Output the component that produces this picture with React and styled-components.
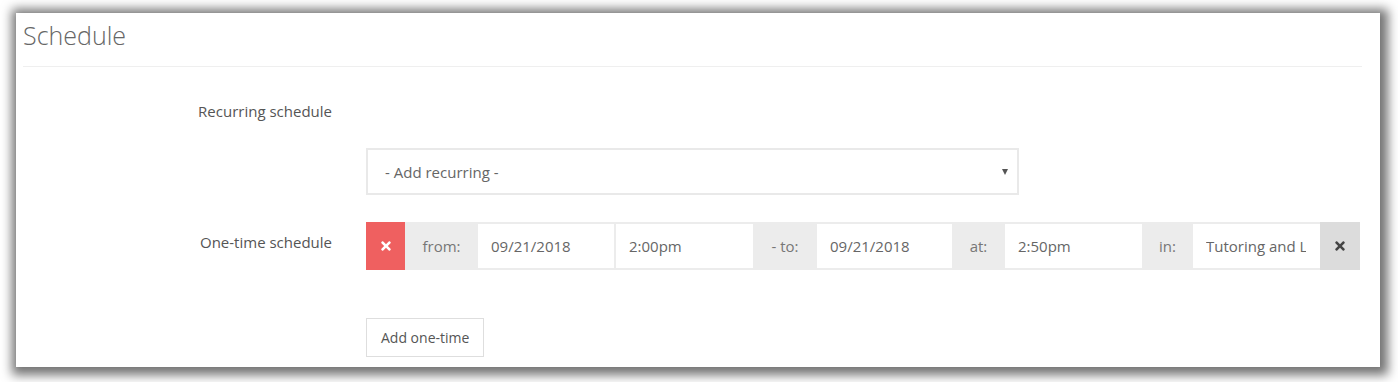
import React from 'react';
import styled, { createGlobalStyle } from 'styled-components';
import { FaTimes } from 'react-icons/fa';

const GlobalStyle = createGlobalStyle`
  html, body {
    margin: 0;
    padding: 0;
    background: #ffffff;
    font-family: 'Open Sans', 'Liberation Sans', sans-serif;
  }
`;

const fields = [
  { label: 'from:', width: 73, inputs: [{ value: '09/21/2018', width: 136 }, { value: '2:00pm', width: 137 }] },
  { label: '- to:', width: 64, inputs: [{ value: '09/21/2018', width: 135 }] },
  { label: 'at:', width: 53, inputs: [{ value: '2:50pm', width: 137 }] },
  { label: 'in:', width: 51, inputs: [{ value: 'Tutoring and Learning Center', width: 127 }] },
];

const App = () => {
  return (
    <Page>
      <GlobalStyle />
      <Panel>
        <Header>
          <Title>Schedule</Title>
        </Header>

        <FormGroup $top={34}>
          <Label>Recurring schedule</Label>
          <Field>
            <SelectBox>
              <span>- Add recurring -</span>
              <Caret />
            </SelectBox>
          </Field>
        </FormGroup>

        <FormGroup $top={27}>
          <Label $pad={10}>One-time schedule</Label>
          <Field>
            <OneTimeRow>
              <RemoveButton type="button" aria-label="Remove">
                <FaTimes size={14} />
              </RemoveButton>
              {fields.map((f) => (
                <React.Fragment key={f.label}>
                  <Addon $width={f.width}>{f.label}</Addon>
                  {f.inputs.map((inp, i) => (
                    <TextInput
                      key={inp.value}
                      $width={inp.width}
                      $gap={i > 0}
                      value={inp.value}
                      readOnly
                    />
                  ))}
                </React.Fragment>
              ))}
              <ClearButton type="button" aria-label="Clear">
                <FaTimes size={14} />
              </ClearButton>
            </OneTimeRow>
            <AddButton type="button">Add one-time</AddButton>
          </Field>
        </FormGroup>
      </Panel>
    </Page>
  );
};

// Styled Components
const Page = styled.div`
  padding: 13px 18px 15px 16px;
`;

const Panel = styled.div`
  background: #ffffff;
  padding: 6px 18px 10px 7px;
  box-shadow: 2px 2px 10px 6px rgba(0, 0, 0, 0.55);
`;

const Header = styled.div`
  padding-bottom: 15px;
  border-bottom: 1px solid #efefef;
`;

const Title = styled.h2`
  margin: 0;
  font-size: 25px;
  font-weight: 300;
  line-height: 32px;
  color: #666;
`;

const FormGroup = styled.div`
  display: grid;
  grid-template-columns: 309px 1fr;
  column-gap: 34px;
  align-items: start;
  margin-top: ${(p) => p.$top}px;
`;

const Label = styled.div`
  text-align: right;
  font-size: 15px;
  line-height: 20px;
  color: #555;
  padding-top: ${(p) => p.$pad || 0}px;
`;

const Field = styled.div`
  display: flex;
  flex-direction: column;
  align-items: flex-start;
`;

const SelectBox = styled.div`
  box-sizing: border-box;
  margin-top: 47px;
  width: 653px;
  height: 47px;
  border: 2px solid #e9e9e9;
  display: flex;
  align-items: center;
  justify-content: space-between;
  padding: 0 9px 0 17px;
  font-size: 15px;
  color: #666;
`;

const Caret = styled.span`
  width: 0;
  height: 0;
  border-left: 3.5px solid transparent;
  border-right: 3.5px solid transparent;
  border-top: 6px solid #555;
`;

const OneTimeRow = styled.div`
  display: flex;
  height: 48px;
  background: #ececec;
`;

const RemoveButton = styled.button`
  width: 39px;
  border: none;
  padding: 0;
  background: #ef6060;
  color: #fff;
  display: flex;
  align-items: center;
  justify-content: center;
`;

const ClearButton = styled(RemoveButton)`
  width: 40px;
  background: #dcdcdc;
  color: #444;
`;

const Addon = styled.div`
  width: ${(p) => p.$width}px;
  display: flex;
  align-items: center;
  justify-content: center;
  font-size: 15px;
  color: #777;
`;

const TextInput = styled.input`
  box-sizing: border-box;
  width: ${(p) => p.$width}px;
  margin: 2px 0 2px ${(p) => (p.$gap ? 2 : 0)}px;
  border: none;
  outline: none;
  background: #fff;
  padding: 0 14px 0 13px;
  font-family: 'Open Sans', 'Liberation Sans', sans-serif;
  font-size: 15px;
  color: #666;
`;

const AddButton = styled.button`
  margin-top: 48px;
  height: 39px;
  padding: 0 14px;
  background: #fff;
  border: 1px solid #dedede;
  font-family: 'Open Sans', 'Liberation Sans', sans-serif;
  font-size: 14px;
  color: #555;
`;

export default App;
